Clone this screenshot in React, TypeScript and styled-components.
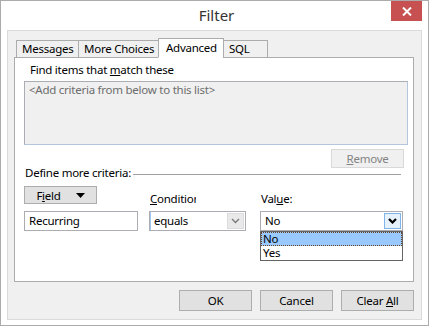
import * as React from 'react';
import styled, { createGlobalStyle } from 'styled-components';

const GlobalStyle = createGlobalStyle`
    html, body {
        margin: 0;
        padding: 0;
        background: #ffffff;
    }
    body {
        font-family: "Noto Sans", "Open Sans", "Liberation Sans", sans-serif;
        font-size: 11.5px;
        letter-spacing: -0.25px;
        color: #000000;
    }
    * {
        box-sizing: border-box;
    }
`;

const Window = styled.div`
    width: 429px;
    height: 326px;
    border: 1px solid #ababab;
    background: #ffffff;
    display: flex;
    flex-direction: column;
`;

const TitleBar = styled.div`
    height: 29px;
    display: grid;
    grid-template-columns: 1fr auto 1fr;
    align-items: start;
    .title {
        grid-column: 2;
        font-size: 15px;
        letter-spacing: 0;
        line-height: 29px;
        color: #333333;
        padding-left: 4px;
    }
`;

const CloseButton = styled.div`
    grid-column: 3;
    justify-self: end;
    width: 31px;
    height: 20px;
    margin-right: 6px;
    background: #c75050;
    display: flex;
    align-items: center;
    justify-content: center;
`;

const Client = styled.div`
    flex: 1;
    margin: 0 6px 5px 6px;
    border: 1px solid #dadada;
    background: #f0f0f0;
    padding: 7px 7px 8px 6px;
    display: flex;
    flex-direction: column;
`;

const TabRow = styled.div`
    display: flex;
    align-items: flex-end;
    height: 20px;
    margin-left: 2px;
    margin-bottom: -1px;
    position: relative;
    z-index: 1;
`;

const Tab = styled.div<{ $active?: boolean; $w: number }>`
    width: ${(p) => p.$w}px;
    height: ${(p) => (p.$active ? 20 : 18)}px;
    margin-left: -1px;
    border: 1px solid #acacac;
    border-bottom: ${(p) => (p.$active ? '1px solid #ffffff' : '1px solid #acacac')};
    background: ${(p) => (p.$active ? '#ffffff' : '#f0f0f0')};
    padding-left: ${(p) => (p.$active ? 7 : 5)}px;
    line-height: ${(p) => (p.$active ? 17 : 16)}px;
    white-space: nowrap;
    &:first-child {
        margin-left: 0;
    }
`;

const Panel = styled.div`
    height: 225px;
    border: 1px solid #acacac;
    background: #ffffff;
    padding: 4px 0 0 9px;
    display: flex;
    flex-direction: column;
`;

const Label = styled.div`
    line-height: 16px;
    padding-left: 6px;
    white-space: nowrap;
`;

const CriteriaList = styled.div`
    width: 384px;
    height: 64px;
    margin-top: 3px;
    border: 1px solid #abadb3;
    border-right-color: #b4c6dc;
    border-bottom-color: #b4c6dc;
    background: #f0f0f0;
    color: #6d6d6d;
    padding: 0 0 0 4px;
    line-height: 15px;
`;

const Button = styled.div<{ $disabled?: boolean; $w: number; $h: number }>`
    width: ${(p) => p.$w}px;
    height: ${(p) => p.$h}px;
    border: 1px solid ${(p) => (p.$disabled ? '#d9d9d9' : '#adadad')};
    background: ${(p) => (p.$disabled ? '#f0f0f0' : '#e1e1e1')};
    color: ${(p) => (p.$disabled ? '#838383' : '#000000')};
    display: flex;
    align-items: center;
    justify-content: center;
    gap: 15px;
    white-space: nowrap;
`;

const RemoveRow = styled.div`
    width: 380px;
    display: flex;
    justify-content: flex-end;
    margin-top: 4px;
`;

const SectionHeader = styled.div`
    width: 377px;
    display: flex;
    align-items: center;
    margin-top: -2px;
    line-height: 14px;
    padding-left: 1px;
    white-space: nowrap;
    &::after {
        content: '';
        flex: 1;
        height: 1px;
        background: #a0a0a0;
        margin-left: 2px;
        margin-top: 2px;
    }
`;

const CriteriaGrid = styled.div`
    display: grid;
    grid-template-columns: 114px 97px 146px;
    grid-template-rows: 18px 20px;
    column-gap: 11px;
    row-gap: 7px;
    margin-top: 6px;
    > :nth-child(3) {
        margin-left: 3px;
    }
`;

const FieldLabel = styled.div<{ $clip?: number }>`
    align-self: start;
    margin-top: 5px;
    line-height: 16px;
    padding-left: 1px;
    white-space: nowrap;
    overflow: hidden;
    max-width: ${(p) => (p.$clip ? `${p.$clip}px` : 'none')};
`;

const TextBox = styled.div`
    border: 1px solid #abadb3;
    background: #ffffff;
    padding-left: 4px;
    line-height: 18px;
`;

const Combo = styled.div<{ $focus?: boolean; $shift?: number }>`
    position: relative;
    margin-left: ${(p) => p.$shift || 0}px;
    border: 1px solid #abadb3;
    background: #ffffff;
    display: flex;
    align-items: center;
    .value {
        flex: 1;
        padding-left: 3px;
        line-height: 18px;
        border-left: ${(p) => (p.$focus ? '1px solid #9fc6f0' : '1px solid transparent')};
    }
`;

const ComboButton = styled.div<{ $hot?: boolean }>`
    width: 17px;
    height: 16px;
    margin-right: 1px;
    border: 1px solid ${(p) => (p.$hot ? '#7eb4ea' : '#dcdcdc')};
    background: ${(p) => (p.$hot ? '#e5f1fb' : '#e9e9e9')};
    display: flex;
    align-items: center;
    justify-content: center;
`;

const DropList = styled.div`
    position: absolute;
    left: -1px;
    right: -1px;
    top: 19px;
    border: 1px solid #646464;
    background: #ffffff;
    z-index: 2;
`;

const DropItem = styled.div<{ $selected?: boolean }>`
    height: 14px;
    line-height: 14px;
    padding-left: 2px;
    background: ${(p) => (p.$selected ? '#99c9ff' : '#ffffff')};
    outline: ${(p) => (p.$selected ? '1px dotted #6b4520' : 'none')};
    outline-offset: -1px;
`;

const Footer = styled.div`
    display: flex;
    justify-content: flex-end;
    gap: 8px;
    margin-top: 8px;
`;

const Chevron = ({ dark }: { dark?: boolean }) => (
    <svg width="9" height="6" viewBox="0 0 9 6">
        <polyline
            points="1,1 4.5,4.5 8,1"
            fill="none"
            stroke={dark ? '#000000' : '#7a7a7a'}
            strokeWidth={dark ? 2.2 : 1.4}
        />
    </svg>
);

const App = () => {
    return (
        <>
            <GlobalStyle />
            <Window>
                <TitleBar>
                    <span className="title">Filter</span>
                    <CloseButton>
                        <svg width="10" height="9" viewBox="0 0 10 9">
                            <path d="M1 0.5 L9 8.5 M9 0.5 L1 8.5" stroke="#ffffff" strokeWidth="2" />
                        </svg>
                    </CloseButton>
                </TitleBar>
                <Client>
                    <TabRow>
                        <Tab $w={63}>Messages</Tab>
                        <Tab $w={81}>More Choices</Tab>
                        <Tab $w={66} $active>Advanced</Tab>
                        <Tab $w={45}>SQL</Tab>
                    </TabRow>
                    <Panel>
                        <Label>Find items that <u>m</u>atch these</Label>
                        <CriteriaList>&lt;Add criteria from below to this list&gt;</CriteriaList>
                        <RemoveRow>
                            <Button $disabled $w={73} $h={19}>
                                <span><u>R</u>emove</span>
                            </Button>
                        </RemoveRow>
                        <SectionHeader>Define more criteria:</SectionHeader>
                        <CriteriaGrid>
                            <Button $w={73} $h={18}>
                                <span>F<u>i</u>eld</span>
                                <svg width="9" height="5" viewBox="0 0 9 5">
                                    <polygon points="0,0 9,0 4.5,5" fill="#000000" />
                                </svg>
                            </Button>
                            <FieldLabel $clip={47}><u>C</u>ondition</FieldLabel>
                            <FieldLabel>Val<u>u</u>e:</FieldLabel>
                            <TextBox>Recurring</TextBox>
                            <Combo $focus>
                                <span className="value">equals</span>
                                <ComboButton>
                                    <Chevron />
                                </ComboButton>
                            </Combo>
                            <Combo $shift={3}>
                                <span className="value">No</span>
                                <ComboButton $hot>
                                    <Chevron dark />
                                </ComboButton>
                                <DropList>
                                    <DropItem $selected>No</DropItem>
                                    <DropItem>Yes</DropItem>
                                </DropList>
                            </Combo>
                        </CriteriaGrid>
                    </Panel>
                    <Footer>
                        <Button $w={73} $h={21}>OK</Button>
                        <Button $w={73} $h={21}>Cancel</Button>
                        <Button $w={73} $h={21}>
                            <span>Clear <u>A</u>ll</span>
                        </Button>
                    </Footer>
                </Client>
            </Window>
        </>
    );
};

export default App;
